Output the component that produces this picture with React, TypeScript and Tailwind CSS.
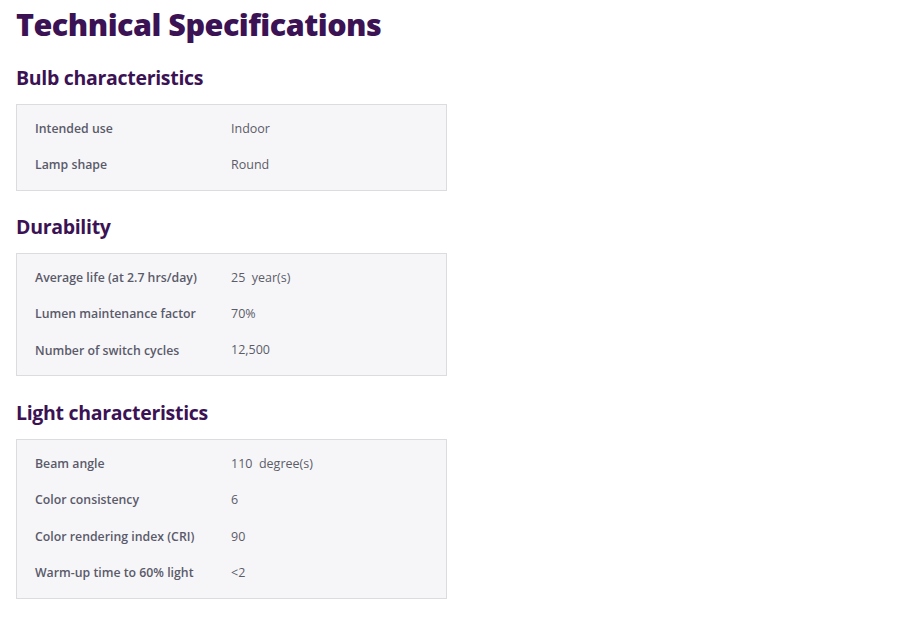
type Spec = { label: string; value: string };

const sections: { title: string; gap: string; rows: Spec[] }[] = [
  {
    title: "Bulb characteristics",
    gap: "mt-4",
    rows: [
      { label: "Intended use", value: "Indoor" },
      { label: "Lamp shape", value: "Round" },
    ],
  },
  {
    title: "Durability",
    gap: "mt-[22px]",
    rows: [
      { label: "Average life (at 2.7 hrs/day)", value: "25\u00a0 year(s)" },
      { label: "Lumen maintenance factor", value: "70%" },
      { label: "Number of switch cycles", value: "12,500" },
    ],
  },
  {
    title: "Light characteristics",
    gap: "mt-[23px]",
    rows: [
      { label: "Beam angle", value: "110\u00a0 degree(s)" },
      { label: "Color consistency", value: "6" },
      { label: "Color rendering index (CRI)", value: "90" },
      { label: "Warm-up time to 60% light", value: "<2" },
    ],
  },
];

export default function App() {
  return (
    <div className="min-h-[618px] w-[900px] bg-white px-4 font-['Open_Sans',sans-serif]">
      <h1 className="h-12 text-[30.5px] leading-[48px] font-extrabold tracking-[-0.5px] text-[#3b1254]">
        Technical Specifications
      </h1>

      {sections.map((section) => (
        <section key={section.title} className={section.gap}>
          <h2 className="mb-3 text-[19.5px] leading-7 font-bold tracking-[-0.3px] text-[#3b1254]">
            {section.title}
          </h2>
          <div className="w-[431px] border border-[#dcdce0] bg-[#f6f6f8] py-[6px]">
            {section.rows.map((row) => (
              <div
                key={row.label}
                className="flex h-[36.4px] items-center text-[12.3px] text-[#5a5a6a]"
              >
                <span className="w-[214px] shrink-0 pl-[18px] font-semibold">
                  {row.label}
                </span>
                <span className="whitespace-pre text-[12.5px] text-[#5c5c68]">
                  {row.value}
                </span>
              </div>
            ))}
          </div>
        </section>
      ))}
    </div>
  );
}
